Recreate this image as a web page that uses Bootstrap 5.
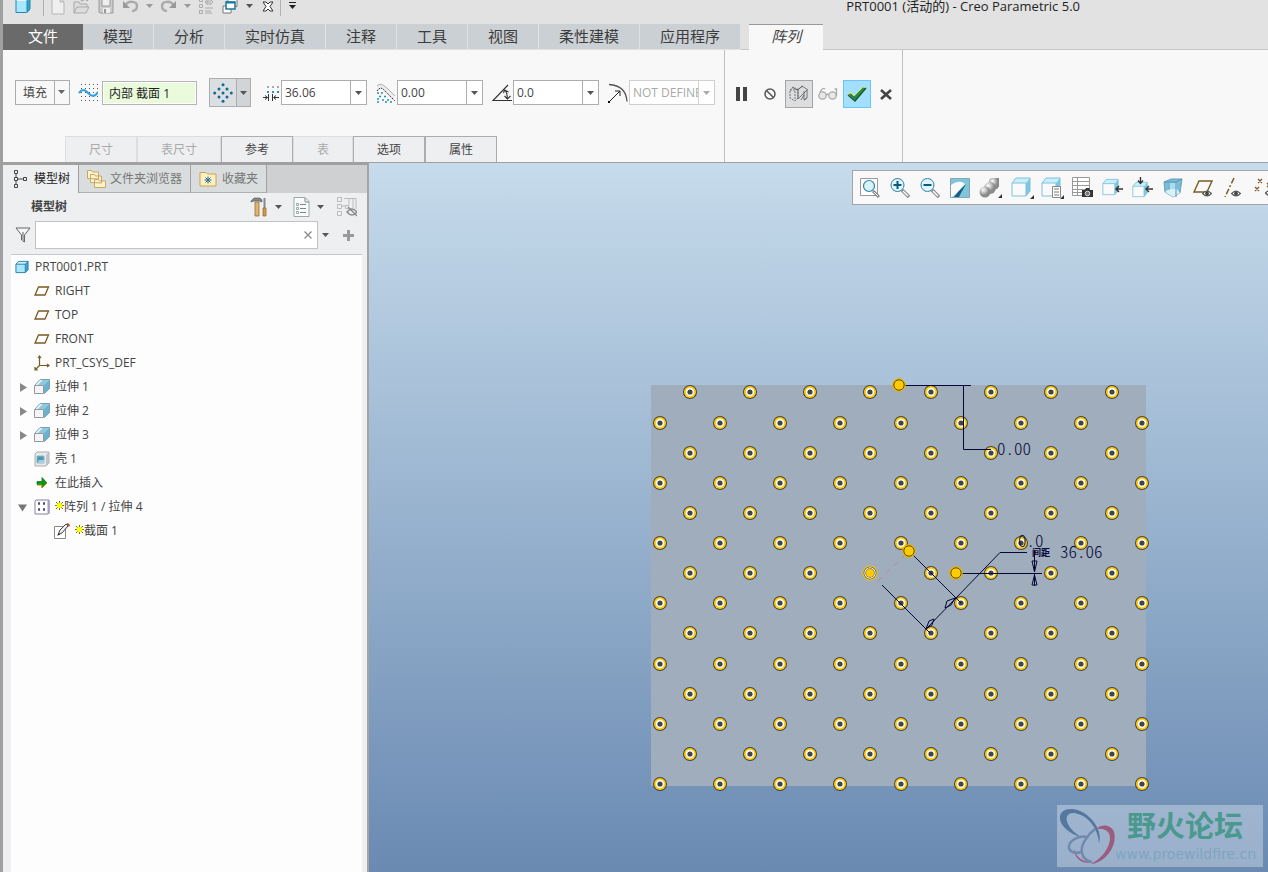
<!DOCTYPE html>
<html lang="zh-CN">
<head>
<meta charset="utf-8">
<meta name="viewport" content="width=device-width, initial-scale=1">
<title>PRT0001 (活动的) - Creo Parametric 5.0</title>
<link href="https://cdn.jsdelivr.net/npm/bootstrap@5.3.0/dist/css/bootstrap.min.css" rel="stylesheet">
<style>
:root{--edge:#a0a0a0;--line:#adadad;--ink:#444}
body{font-family:"Open Sans","Noto Sans CJK SC",sans-serif;font-size:12px;line-height:16px;color:var(--ink);background:#f8f8f8;border-left:3px solid var(--edge)}
button{font:inherit;color:inherit;background:none;border:0;padding:0}
svg{display:block;flex:none}
.titlebar{height:24px;background:#e2e2e2;padding-left:8px}
.quick{height:12px}
.tb{width:24px;height:24px;display:flex;align-items:center;justify-content:center;flex:none}
.tb.slim{width:14px}
.vsep{width:1px;height:20px;background:#b0b0b0}
.apptitle{font-size:13px;line-height:13px;color:#222;padding-right:188px;white-space:nowrap}
.tabs{height:26px;background:#e2e2e2;font-size:15px}
.tabs a{display:flex;align-items:center;justify-content:center;padding:0 20px 2px;height:25px;background:#cbd0d4;color:#3c3c3c;text-decoration:none;margin-right:1px;white-space:nowrap}
.tabs a.filetab{width:80px;padding:0 0 3px;margin:0;background:#6a6a6a;color:#fff;height:26px}
.tabs a.current{background:#f8f8f8;height:26px;padding:0 22px 3px;margin:0;border-top:1px solid #999;font-style:italic;color:#444}
.tabs .filler{border-bottom:1px solid #c6c6c6}
.ribbon{height:113px;border-bottom:1px solid var(--edge)}
.dash{width:722px;border-right:1px solid #bfbfbf}
.acts{width:178px;border-right:1px solid #bfbfbf;padding:30px 0 0 2px;gap:1px}
.params{padding:28px 0 0 12px;height:57px}
.combo{display:flex;height:25px;border:1px solid var(--line);background:#fff;width:86px}
.combo input{border:0;outline:0;min-width:0;flex:1;padding:0 0 0 3px;background:none;color:inherit;font-size:12px}
.combo button{width:16px;border-left:1px solid var(--line);display:flex;align-items:center;justify-content:center}
.combo.off{border-color:#d0d0d0;color:#a8a8a8}
.combo.off button{border-color:#d0d0d0}
.combo.off input::placeholder{color:#a8a8a8}
.kind{appearance:none;width:55px;height:25px;border:1px solid var(--line);border-radius:0;padding:0 0 0 7px;font-size:12px;line-height:20px;color:var(--ink);background:url("data:image/svg+xml,%3Csvg xmlns='http://www.w3.org/2000/svg' width='16' height='25'%3E%3Cpath d='M.5 0V25' stroke='%23adadad'/%3E%3Cpath d='M4 10h7l-3.500 4z' fill='%23666'/%3E%3C/svg%3E") right -1px center no-repeat #f8f8f8}
.section{width:95px;height:24px;border:1px solid #b5b5b5;box-shadow:inset 0 0 0 1px #fff;background:#eafbdc;font-size:12px;color:#222;padding:0 6px;outline:0}
.gridpick{width:42px;height:29px;border:1px solid var(--line);background:#dcdfe1;display:flex;margin:0 8px 0 12px}
.gridpick span{display:flex;align-items:center;justify-content:center}
.gridpick span:first-child{width:27px;border-right:1px solid var(--line)}
.gridpick span:last-child{flex:1;background:#d2d5d7}
.act{width:28px;height:28px;display:flex;align-items:center;justify-content:center;border:1px solid transparent}
.act.on{background:#dcdee0;border-color:#a5a5a5}
.act.ok{background:#a3dfff;border-color:#6bc5f5}
.panels{padding-left:62px}
.panels button{height:26px;border:1px solid #dcdee0;border-bottom:0;background:#eeeff1;padding:0 23px;color:#aaa}
.panels button:enabled{border-color:var(--line);color:var(--ink)}
.side{width:366px;background:#edeff1;border-top:2px solid var(--edge);border-right:2px solid #a4a4a4}
.sidetabs{height:28px;background:#cfd0d1}
.sidetabs button{display:flex;align-items:center;border-right:1px solid var(--edge);border-bottom:1px solid #b0b0b0;background:#d9dddd;color:#777;padding:0 7px;white-space:nowrap}
.sidetabs button.on{background:#edeff1;color:#222;border-bottom:0;width:76px}
.sidetabs .folders{width:112px}
.sidetabs .favs{width:76px}
.sidehead{height:28px;padding-left:28px}
.finder{padding-left:12px}
.search{height:28px;width:283px;border:1px solid #c2c2c2;background:#fff;display:flex}
.search input{border:0;outline:0;flex:1;min-width:0}
.tree{margin:5px 5px 0 8px;border-top:1px solid #c5c8ca;background:#fdfdfd;list-style:none;padding:0;white-space:nowrap}
.tree li{height:24px;display:flex;align-items:center}
.tree .arrow{width:9px;height:9px;margin:0 7px 0 7px}
.tree .glyph{width:16px;height:16px;margin-right:5px}
.tree .root{padding-left:4px}
.tree .root svg{margin-right:6px}
.lv1{padding-left:23px}.lv2{padding-left:43px}
.scene{background:linear-gradient(#c6dbeb,#6a8ab2);min-width:0;overflow:hidden}
.scene>svg{width:100%;height:100%}
.viewbar{position:absolute;right:0;top:7px;width:416px;height:35px;border:1px solid #a5a5a5;border-right:0;background:#f8f8f8;overflow:hidden;padding-left:2px}
.viewbar button{width:30px;height:33px;flex:none;display:flex;align-items:center;justify-content:center}
.viewbar button:nth-child(6){margin-left:2px}
.viewbar button:nth-child(11){margin-left:1px}
.dim{font-family:"Noto Sans CJK SC",sans-serif;font-size:17px;font-weight:300;font-feature-settings:"hwid";fill:#060638}
</style>
</head>
<body class="vh-100 d-flex flex-column overflow-hidden">
<svg width="0" height="0" class="position-absolute" aria-hidden="true">
<defs>
<symbol id="caret" viewBox="0 0 7 4"><path d="M0 0h7L3.500 4z"/></symbol>
<symbol id="cube" viewBox="0 0 16 16"><path d="M2 5l3-3h10l-3 3z" fill="#d6f4ff"/><path d="M12 5l3-3v9l-3 3z" fill="#3fa5cf"/><path d="M2 5h10v9H2z" fill="#a9e7ff"/><path d="M2 5l3-3h10v9l-3 3H2zM2 5h10v9M12 5l3-3" fill="none" stroke="#1f7ea6"/></symbol>
<symbol id="plane" viewBox="0 0 16 16"><path d="M4.500 4h10l-3.500 8h-10z" fill="none" stroke="#7a5b26" stroke-width="1.300"/></symbol>
<symbol id="extrude" viewBox="0 0 16 16"><path d="M.5 6L6 .5h9.500v9L10 15" fill="#e4f4fa"/><path d="M4 6L9 .5h6.500l-5 5.500z" fill="#8ec9e0"/><path d="M10 6l5.500-5.500v9L10 15z" fill="#6cb2d0"/><path d="M1 6L6 .5h9.500v9l-5 5" fill="none" stroke="#7d9fae"/><path d="M.5 6.500h9v8h-9z" fill="#f4f4f6" stroke="#999"/></symbol>
<symbol id="viewcube" viewBox="0 0 20 20"><path d="M1 6l4-5h14l-4 5z" fill="#c9effc"/><path d="M15 6l4-5v13l-4 5z" fill="#7cc8e2"/><path d="M1 6h14v13H1z" fill="#fafafa"/><path d="M1 6l4-5h14v13l-4 5H1zM1 6h14v13" fill="none" stroke="#7fc0da"/></symbol>
<symbol id="eye" viewBox="0 0 11 8"><path d="M.5 4Q5.500-1.500 10.500 4 5.500 9.500.5 4z" fill="#fff" stroke="#555" stroke-width="1.300"/><circle cx="5.500" cy="4" r="2.200" fill="#444"/></symbol>
<symbol id="star" viewBox="0 0 9 9"><path d="M4.500 0v9M0 4.500h9M1 1l7 7M8 1L1 8" stroke="#6b6b00"/><circle cx="4.500" cy="4.500" r="2.800" fill="#ff0"/></symbol>
</defs></svg>

<header class="titlebar d-flex">
 <div class="quick d-flex align-items-center">
  <button class="tb" aria-label="Creo"><svg width="16" height="18" viewBox="0 0 16 18"><path d="M1 4l3-3h11l-3 3z" fill="#dff6ff"/><path d="M12 4l3-3v12l-3 3z" fill="#36a3cd"/><path d="M1 4h11v12H1z" fill="#a8e7ff"/><path d="M1 1v14.500h10.500L15 12V1M12 2v13" fill="none" stroke="#2387ad"/></svg></button>
  <span class="vsep ms-2"></span><span class="pe-1"></span>
  <button class="tb" style="margin-left:-2px" aria-label="新建"><svg width="14" height="18" viewBox="0 0 14 18"><path d="M1 1h8l4 4v12H1zM9 1v4h4" fill="#efefef" stroke="#b5b5b5"/></svg></button>
  <button class="tb" aria-label="打开"><svg width="18" height="16" viewBox="0 0 18 16"><path d="M1 15V4h5l1 2h7v3M1 15l3-6h12l-3 6z" fill="#ddd" stroke="#aaa"/><path d="M8 3l4-2 3 2" fill="none" stroke="#aaa" stroke-width="1.500"/></svg></button>
  <button class="tb" aria-label="保存"><svg width="16" height="16" viewBox="0 0 16 16"><path d="M1 1h14v14H2l-1-1z" fill="#ccc" stroke="#999"/><path d="M4 1h8v7H4z" fill="#eee" stroke="#999"/><path d="M5 10h7v5H5z" fill="#eee"/><path d="M6 11h2v4H6z" fill="#999"/></svg></button>
  <button class="tb" aria-label="撤销"><svg width="17" height="16" viewBox="0 0 17 16"><path d="M3 8c3-6 12-5 12 0 0 3-2 5-5 5" fill="none" stroke="#aaa" stroke-width="2.500"/><path d="M1 3v7h7z" fill="#999"/></svg></button>
  <button class="tb slim" aria-label="撤销列表"><svg width="7" height="4" fill="#999"><use href="#caret"/></svg></button>
  <button class="tb" aria-label="重做"><svg width="17" height="16" viewBox="0 0 17 16"><path d="M14 8C11 2 2 3 2 8c0 3 2 5 5 5" fill="none" stroke="#aaa" stroke-width="2.500"/><path d="M16 3v7H9z" fill="#999"/></svg></button>
  <button class="tb slim" aria-label="重做列表"><svg width="7" height="4" fill="#999"><use href="#caret"/></svg></button>
  <button class="tb" aria-label="重新生成"><svg width="16" height="16" viewBox="0 0 16 16" fill="none" stroke="#aaa"><path d="M1.500.5h3v3h-3zM1.500 6.500h3v3h-3zM1.500 12.500h3v3h-3zM7 10h8M7 13h6M7 15h7M7 4l3-3v6L7 4h3M15 4l-3-3v6z"/></svg></button>
  <button class="tb" aria-label="窗口"><svg width="17" height="16" viewBox="0 0 17 16"><path d="M6 .5h9v8H6zM1 8h8v7H1z" fill="#fff" stroke="#777"/><path d="M4 4h9v7H4z" fill="#fff" stroke="#1c789c" stroke-width="1.500"/><path d="M4 4.500h9" stroke="#1c789c" stroke-width="2"/></svg></button>
  <button class="tb slim" aria-label="窗口列表"><svg width="7" height="4" fill="#555"><use href="#caret"/></svg></button>
  <button class="tb" aria-label="关闭"><svg width="12" height="11" viewBox="0 0 12 11"><path d="M1 1h3l2 2 2-2h3L8 5.500 11 10H8L6 8l-2 2H1l3-4.500z" fill="#fff" stroke="#333"/></svg></button>
  <span class="vsep me-1"></span>
  <button class="tb slim" aria-label="自定义"><svg width="9" height="8" viewBox="0 0 9 8" fill="#222"><path d="M1 0h7v1H1zM1 3h7L4.500 7z"/></svg></button>
 </div>
 <div class="apptitle ms-auto">PRT0001 (活动的) - Creo Parametric 5.0</div>
</header>

<nav class="tabs d-flex align-items-start">
 <a class="filetab" href="#">文件</a><a href="#">模型</a><a href="#">分析</a><a href="#">实时仿真</a><a href="#">注释</a><a href="#">工具</a><a href="#">视图</a><a href="#">柔性建模</a><a href="#">应用程序</a>
 <span class="filler h-100 px-1"></span><a class="current" href="#">阵列</a><span class="filler flex-fill h-100"></span>
</nav>

<section class="ribbon d-flex">
 <div class="dash d-flex flex-column flex-shrink-0">
  <div class="params d-flex align-items-center">
   <select class="kind" aria-label="阵列类型"><option>填充</option></select>
   <svg class="ms-2 me-1" width="20" height="20" viewBox="0 0 20 20"><path d="M3 1.500h17M3 5.500h17M3 9.500h17M3 13.500h17M3 17.500h17" stroke="#555" stroke-dasharray="1 3"/><path d="M1 10c3-4 5-4 9 0s7 4 10-1" fill="none" stroke="#35a4da" stroke-width="2.200"/></svg>
   <input class="section" aria-label="截面" value="内部 截面 1">
   <button class="gridpick" aria-label="菱形阵列"><span><svg width="20" height="20" viewBox="0 0 20 20" fill="#126b92"><circle cx="10" cy="1.700" r="1.500"/><circle cx="6" cy="6" r="1.500"/><circle cx="14" cy="6" r="1.500"/><circle cx="1.700" cy="10" r="1.500"/><circle cx="10" cy="10" r="1.500"/><circle cx="18.300" cy="10" r="1.500"/><circle cx="6" cy="14" r="1.500"/><circle cx="14" cy="14" r="1.500"/><circle cx="10" cy="18.300" r="1.500"/></svg></span><span><svg width="7" height="4" fill="#555"><use href="#caret"/></svg></span></button>
   <svg class="ms-1" width="18" height="18" viewBox="0 0 18 18"><path d="M4 3h2M9 3h2M14 3h2" stroke="#aaa" stroke-width="2"/><path d="M4 8h2M9 8h2M14 8h2" stroke="#2a93bd" stroke-width="2"/><path d="M0 13.500h5M16 13.500h-5M5.500 10v7M9.500 10v7M2 11.500l2.500 2L2 15.500M13 11.500l-2.500 2 2.500 2" fill="none" stroke="#333"/></svg>
   <label class="combo"><input aria-label="间距" value="36.06"><button aria-label="间距列表"><svg width="7" height="4" fill="#555"><use href="#caret"/></svg></button></label>
   <svg class="ms-2" width="22" height="20" viewBox="0 0 22 20"><path d="M2 3c4-4 7-1 17 9v6L9 9 6 6 2 8z" fill="#eee"/><path d="M2 3c4-4 7-1 18 10" fill="none" stroke="#aaa"/><path d="M2 8c3-4 5-4 9 1l9 9" fill="none" stroke="#333" stroke-dasharray="1.500 1"/><path d="M2 10h2M6 10h2M4 13.500h2M9 13.500h2M2 16h2M7 17h2M12 17h2M2 19h2M10 19h2M15 19h2" stroke="#258fb9" stroke-width="1.600"/></svg>
   <label class="combo"><input aria-label="边界距离" value="0.00"><button aria-label="距离列表"><svg width="7" height="4" fill="#555"><use href="#caret"/></svg></button></label>
   <svg class="ms-2" width="22" height="20" viewBox="0 0 22 20"><path d="M17 2L2 17.500h19" fill="none" stroke="#333" stroke-width="1.100"/><path d="M14 7q3 4 2 9M12.500 10l1-3 4 2M13.500 13l3 3 3-3" fill="none" stroke="#333" stroke-width="1.100"/></svg>
   <label class="combo"><input aria-label="旋转" value="0.0"><button aria-label="旋转列表"><svg width="7" height="4" fill="#555"><use href="#caret"/></svg></button></label>
   <svg class="ms-2" width="22" height="20" viewBox="0 0 22 20"><path d="M2 1.500q17 1 18 17" fill="none" stroke="#555" stroke-width="1.300"/><path d="M2 19L13 8M8 8h5v5" fill="none" stroke="#222"/><path d="M1 18h2v2H1z"/></svg>
   <label class="combo off"><input aria-label="半径" placeholder="NOT DEFINED" disabled><button aria-label="半径列表" disabled><svg width="7" height="4" fill="#aaa"><use href="#caret"/></svg></button></label>
  </div>
  <div class="panels d-flex mt-auto">
   <button disabled>尺寸</button><button disabled>表尺寸</button><button>参考</button><button disabled>表</button><button>选项</button><button>属性</button>
  </div>
 </div>
 <div class="acts d-flex flex-shrink-0">
  <button class="act" aria-label="暂停"><svg width="11" height="14" fill="#444"><path d="M0 0h4v14H0zM7 0h4v14H7z"/></svg></button>
  <button class="act" aria-label="无预览"><svg width="12" height="12" viewBox="0 0 12 12" fill="none" stroke="#555" stroke-width="1.500"><circle cx="6" cy="6" r="5"/><path d="M2.500 2.500l7 7"/></svg></button>
  <button class="act on" aria-label="分离"><svg width="20" height="18" viewBox="0 0 20 18" fill="none" stroke="#666" stroke-width=".9"><path d="M1 5l4-3 4 3v8l-3 3-5-3zM1 5h5l3-1M6 6v9" stroke-dasharray="2 1"/><path d="M9 14V5l4-4 6 4M18 5v8l-3 2V6M9 14l9-9M12 15l3-5M3 2l5 3 6-4M15 15l3-2"/></svg></button>
  <button class="act" aria-label="特征预览"><svg width="20" height="14" viewBox="0 0 20 14" fill="#e8e8e8" stroke="#aaa" stroke-width="1.300"><circle cx="4.500" cy="8.500" r="3.700"/><circle cx="14.500" cy="8.500" r="3.700"/><path d="M2 5q3-5 5-3M8.500 8q1-2 2 0M18.500 9V2h-2" fill="none"/></svg></button>
  <button class="act ok" aria-label="确定"><svg width="20" height="16" viewBox="0 0 20 16"><path d="M1 8l3-1 3 3L16 1l3 1L8 15z" fill="#2b8b4d" stroke="#e8ef3c" stroke-width=".8"/><path d="M1 9l7 6L19 2" fill="none" stroke="#17552e" stroke-width="1.300"/></svg></button>
  <button class="act" aria-label="取消"><svg width="12" height="12" viewBox="0 0 12 12"><path d="M1 2l10 9M11 2L1 11" stroke="#444" stroke-width="2.600"/></svg></button>
 </div>
</section>

<main class="d-flex flex-fill overflow-hidden">
 <aside class="side flex-shrink-0 d-flex flex-column">
  <div class="sidetabs d-flex">
   <button class="on"><svg class="ms-1 me-1" width="16" height="18" viewBox="0 0 16 18" fill="none" stroke="#444"><path d="M.5.5h3v3h-3zM.5 7.500h3v3h-3zM.5 14.500h3v3h-3zM9.500 7.500h3v3h-3zM2 4v3M2 11v3M4 9h5"/></svg><span>模型树</span></button>
   <button class="folders"><svg class="me-1" width="20" height="20" viewBox="0 0 20 20" fill="#fff3cc" stroke="#c8a766"><path d="M1.500 9.500v-8h4l1 1.500h6v7zM4.500 13.500v-8h4l1 1.500h6v7zM8.500 18.500v-8h4l1 1.500h6v6.500z"/></svg><span>文件夹浏览器</span></button>
   <button class="favs"><svg class="me-1" width="20" height="16" viewBox="0 0 20 16"><path d="M2 15V1.500h6L9.500 3H18v12z" fill="#fff0c4" stroke="#caa254"/><path d="M10 5.500v7M6.500 9h7M7.500 6.500l5 5M12.500 6.500l-5 5" stroke="#1b6c91"/></svg><span>收藏夹</span></button>
  </div>
  <div class="sidehead d-flex align-items-center"><strong class="fw-semibold me-auto">模型树</strong>
   <button class="tb" aria-label="设置"><svg width="18" height="20" viewBox="0 0 18 20"><path d="M1 4l3-3h6l2 2v2l-3-1H4L1 5z" fill="#81858f" stroke="#555" stroke-width=".6"/><path d="M5 5h4v14H5z" fill="#dfb56f" stroke="#8a632a" stroke-width=".7"/><path d="M14.500 1v10" stroke="#888" stroke-width="2"/><path d="M13 11h3v8h-3z" fill="#d39b46" stroke="#8a632a" stroke-width=".7"/></svg></button>
   <button class="tb slim me-1" aria-label="设置列表"><svg width="7" height="4" fill="#555"><use href="#caret"/></svg></button>
   <button class="tb" aria-label="显示"><svg width="17" height="20" viewBox="0 0 17 20"><path d="M1 .5h11l4 4v15H1z" fill="#fbfbfb" stroke="#9aa8a8"/><path d="M12 1v4h4M7 7.500h6M7 11.500h6M7 15.500h6" fill="none" stroke="#788"/><path d="M3.500 6.500h2v2h-2zM3.500 10.500h2v2h-2zM3.500 14.500h2v2h-2z" fill="none" stroke="#9aa"/></svg></button>
   <button class="tb slim me-1" aria-label="显示列表"><svg width="7" height="4" fill="#555"><use href="#caret"/></svg></button>
   <button class="tb ms-1 me-2" aria-label="隐藏"><svg width="20" height="20" viewBox="0 0 20 20" fill="none" stroke="#bbb"><path d="M.5.500h4v4h-4zM.5 7.500h4v4h-4zM.5 14.500h4v4h-4zM8.500 8.500h3v3h-3zM5 9h3M7 1.500h12V12M12 2v6M16 2v9"/><path d="M10 15q5-6 10 0-5 6-10 0zM11 10l9 9" stroke="#888" stroke-width="1.300"/></svg></button>
  </div>
  <div class="finder d-flex align-items-center">
   <svg class="me-1" width="16" height="16" viewBox="0 0 16 16"><path d="M1 1h14L9.500 8v7l-3-2V8z" fill="#f6f6f6" stroke="#666"/><path d="M8 5v9" stroke="#aaa" stroke-width="2"/></svg>
   <div class="search"><input type="text" aria-label="搜索"><button class="px-1" aria-label="清除"><svg width="10" height="10" viewBox="0 0 10 10" stroke="#888" stroke-width="1.200"><path d="M1.500 1.500l7 7M8.500 1.500l-7 7"/></svg></button></div>
   <button class="tb slim" aria-label="搜索选项"><svg width="7" height="4" fill="#555"><use href="#caret"/></svg></button>
   <button class="tb ms-1" aria-label="添加"><svg width="11" height="11"><path d="M0 5.500h11M5.500 0v11" stroke="#999" stroke-width="3"/></svg></button>
  </div>
  <ul class="tree flex-fill">
   <li class="root"><svg width="14" height="14" viewBox="1 1 15 14"><use href="#cube" width="16" height="16"/></svg>PRT0001.PRT</li>
   <li class="lv1"><svg class="glyph"><use href="#plane"/></svg>RIGHT</li>
   <li class="lv1"><svg class="glyph"><use href="#plane"/></svg>TOP</li>
   <li class="lv1"><svg class="glyph"><use href="#plane"/></svg>FRONT</li>
   <li class="lv1"><svg class="glyph" viewBox="0 0 16 16" fill="none" stroke="#7a5b26" stroke-width="1.200"><path d="M5.500 1v9.500H15M5.500 10.500L1 15M4 3l1.500-2L7 3M13 9l2 1.500-2 1.500M1 12v3h3"/></svg>PRT_CSYS_DEF</li>
   <li><svg class="arrow" viewBox="0 0 9 9"><path d="M2 0l7 4.500L2 9z" fill="#888"/></svg><svg class="glyph"><use href="#extrude"/></svg>拉伸 1</li>
   <li><svg class="arrow" viewBox="0 0 9 9"><path d="M2 0l7 4.500L2 9z" fill="#888"/></svg><svg class="glyph"><use href="#extrude"/></svg>拉伸 2</li>
   <li><svg class="arrow" viewBox="0 0 9 9"><path d="M2 0l7 4.500L2 9z" fill="#888"/></svg><svg class="glyph"><use href="#extrude"/></svg>拉伸 3</li>
   <li class="lv1"><svg class="glyph" viewBox="0 0 16 16"><path d="M1 3l2-2h12v11l-3 3H1z" fill="#e8ebee" stroke="#aaa"/><path d="M12 4l3-3v11l-3 3z" fill="#bcc3c9"/><path d="M3 5h7v7H3z" fill="#4f94b5" stroke="#8bb"/><path d="M4 11l1-2h5v3H4z" fill="#9dd0e5"/></svg>壳 1</li>
   <li class="lv1"><svg class="glyph" viewBox="0 0 16 16"><path d="M3 6.500h5v-4l5 5.500-5 5v-3.500H3z" fill="#0b9a0b" stroke="#063" stroke-width=".7"/><path d="M3 10h5v3l5-5" fill="none" stroke="#990"/></svg>在此插入</li>
   <li><svg class="arrow" viewBox="0 0 9 9"><path d="M0 1.500h9L4.500 8.500z" fill="#777"/></svg><svg class="glyph" viewBox="0 0 16 16"><path d="M1 2l1-1h13v13l-1 1H1z" fill="#fff" stroke="#8a809f"/><path d="M14.500 2v13" stroke="#a79cc6" stroke-width="2"/><path d="M4 4.500h2M9 4.500h2M4 10.500h2M9 10.500h2" stroke="#514b75" stroke-width="2.500"/></svg><svg class="mb-1" width="9" height="9"><use href="#star"/></svg><span>阵列 1 / 拉伸 4</span></li>
   <li class="lv2"><svg class="glyph" viewBox="0 0 16 16"><path d="M.5 3.500h11v12H.5z" fill="#fff" stroke="#888"/><path d="M4 12l2-5 6-6 2 2-6 7z" fill="#eee" stroke="#444"/><path d="M12 1l2-1 2 2-1 2z" fill="#b34b43"/><path d="M3 13l3-2-1-1z" fill="#222"/></svg><svg class="mb-1" width="9" height="9"><use href="#star"/></svg><span>截面 1</span></li>
  </ul>
 </aside>

 <section class="scene position-relative flex-fill">
  <svg viewBox="369 163 899 709" role="img" aria-label="填充阵列预览">
   <defs>
    <g id="pt"><circle r="7" fill="#444"/><circle r="6" fill="#ffcb05"/><circle r="4.200" fill="#fff"/><circle r="2.600" fill="#444"/></g>
    <g id="grip"><circle r="6.300" fill="#ffcb05" stroke="#e3b100"/><circle r="5.200" fill="#ffcb05" stroke="#5c4a00"/></g>
    <g id="rowa"><use href="#pt" x="690"/><use href="#pt" x="750"/><use href="#pt" x="810"/><use href="#pt" x="870"/><use href="#pt" x="931"/><use href="#pt" x="991"/><use href="#pt" x="1051"/><use href="#pt" x="1112"/></g>
    <g id="rowb"><use href="#pt" x="660"/><use href="#pt" x="720"/><use href="#pt" x="780"/><use href="#pt" x="840"/><use href="#pt" x="901"/><use href="#pt" x="961"/><use href="#pt" x="1021"/><use href="#pt" x="1081"/><use href="#pt" x="1142"/></g>
   </defs>
   <path d="M651 385h495v401H651z" fill="#a0adbc"/>
   <use href="#rowa" y="392"/><use href="#rowb" y="423"/><use href="#rowa" y="453"/><use href="#rowb" y="483"/><use href="#rowa" y="513"/><use href="#rowb" y="543"/><use href="#rowa" y="573"/><use href="#rowb" y="603"/><use href="#rowa" y="633"/><use href="#rowb" y="664"/><use href="#rowa" y="694"/><use href="#rowb" y="724"/><use href="#rowa" y="754"/><use href="#rowb" y="784"/>
   <g transform="translate(870 573)"><circle r="7.500" fill="#ffcb05"/><circle r="6.500" fill="#555"/><circle r="5.700" fill="#fff"/><circle r="4.700" fill="#6b5a20"/><circle r="4" fill="#ffcb05"/></g>
   <g fill="none" stroke="#060638" stroke-width="1">
    <path d="M904 385.500h67M963.500 385v64.500H991M912 554l49 49M882 585l48 48M926 629l74-76.500h27M961 573.500h81"/>
    <path d="M926 629l3-8 5-2-2 6zM955 598l-4 7-6 3 2-7zM1034.500 550v22M1034.500 574v12M1032 561h5l-2.500 11zM1032 585h5l-2.500-10z"/>
   </g>
   <path d="M878 581l27-26" stroke="#b98087" stroke-width=".8" stroke-dasharray="6 5"/>
   <use href="#grip" x="899" y="385"/><use href="#grip" x="909" y="551"/><use href="#grip" x="956" y="573"/>
   <text class="dim" x="997" y="455">0.00</text><text class="dim" x="1018" y="547">0.0</text><text class="dim" x="1060" y="558">36.06</text>
   <text x="1032" y="556" font-size="9" font-weight="700" font-family="Noto Sans CJK SC, sans-serif" fill="#060638">间距</text>
   <path d="M1057 805h206v62h-206z" fill="#fff" opacity=".32"/>
   <path fill-rule="evenodd" fill="#53779f" d="M1060 818c0-9 10-11 20-7 12 5 23 20 19 32-1-14-10-26-21-29-9-3-14 2-10 10 3 6 8 10 13 13-11-3-21-11-21-19z"/>
   <path fill="#9c5c7d" d="M1096 829c6-6 16-4 18 3 4 15-10 31-23 32 10-5 19-16 19-26 0-7-6-10-14-9zM1074 848c2 10 9 14 18 14-9 3-18-3-18-14z"/>
   <g fill="none" stroke="#7189ae" stroke-width="2.500"><path d="M1095 829c-8 6-15 17-13 24 1 5 5 8 10 9"/><path d="M1087 837c-10-2-19 5-18 11 1 4 6 6 12 4"/></g>
   <text x="1127" y="837" font-size="29" font-weight="700" font-family="Noto Sans CJK SC, sans-serif" fill="#4a998f">野火论坛</text>
   <text x="1115" y="859" font-size="14" font-family="DejaVu Sans, sans-serif" fill="#7da5c2">www.proewildfire.cn</text>
  </svg>
  <div class="viewbar d-flex" role="toolbar">
   <button aria-label="重新调整"><svg width="20" height="20" viewBox="0 0 20 20"><path d="M.5.5h17v17H.5z" fill="#fff" stroke="#999"/><circle cx="9" cy="8" r="5.500" fill="#d9f2fc" stroke="#2a83a8" stroke-width="1.200"/><path d="M13 13l6 6" stroke="#888" stroke-width="3"/><path d="M14 14l4 4" stroke="#eee"/></svg></button>
   <button aria-label="放大"><svg width="20" height="20" viewBox="0 0 20 20"><circle cx="7.500" cy="7" r="6.500" fill="#dff4fc" stroke="#2a83a8"/><path d="M3.500 7h8M7.500 3v8" stroke="#0d5a80" stroke-width="2"/><path d="M12 12l7 7" stroke="#888" stroke-width="3.500"/><path d="M13 13l5 5" stroke="#fff" stroke-width="1.500"/></svg></button>
   <button aria-label="缩小"><svg width="20" height="20" viewBox="0 0 20 20"><circle cx="7.500" cy="7" r="6.500" fill="#dff4fc" stroke="#2a83a8"/><path d="M3.500 7h8" stroke="#0d5a80" stroke-width="2"/><path d="M12 12l7 7" stroke="#888" stroke-width="3.500"/><path d="M13 13l5 5" stroke="#fff" stroke-width="1.500"/></svg></button>
   <button aria-label="重画"><svg width="20" height="20" viewBox="0 0 20 20"><path d="M.5.500h19v19H.5z" fill="#7fc6dd" stroke="#86a5b3"/><path d="M1 7q9-6 14-1l-8 9-5 4H1z" fill="#fafafa"/><path d="M16 6l-8 8-4 5h5l2-4z" fill="#155e80"/></svg></button>
   <button aria-label="显示样式"><svg width="23" height="20" viewBox="0 0 23 20"><defs><radialGradient id="ball" cx=".35" cy=".3"><stop stop-color="#fff"/><stop offset="1" stop-color="#8a8a8a"/></radialGradient></defs><path d="M10 2l2-2h8v8l-2 3h-8z" fill="url(#ball)"/><path d="M18 2l2-2v8l-2 3z" fill="#888"/><circle cx="11" cy="10" r="6" fill="url(#ball)"/><circle cx="6" cy="14" r="5.500" fill="url(#ball)"/><path d="M23 16v4h-4z" fill="#333"/></svg></button>
   <button aria-label="已保存方向"><svg width="23" height="22" viewBox="0 0 23 22"><svg width="20" height="20"><use href="#viewcube"/></svg><path d="M23 18v4h-4z" fill="#333"/></svg></button>
   <button aria-label="视图管理器"><svg width="23" height="22" viewBox="0 0 23 22"><svg width="20" height="20"><use href="#viewcube"/></svg><path d="M11.500 9.500h8v11h-8z" fill="#fff" stroke="#888"/><path d="M13 12h5M13 15h5M13 18h5" stroke="#777"/><path d="M23 18v4h-4z" fill="#333"/></svg></button>
   <button aria-label="截图"><svg width="21" height="21" viewBox="0 0 21 21"><path d="M.5.5h17v18H.5z" fill="#fff" stroke="#999"/><path d="M.5 4.500h17M.5 8.500h17M.5 12.500h17M.5 15.500h17M5.500 1v17" stroke="#999"/><path d="M10 13h3l1-2h3l1 2h3v7H10z" fill="#333"/><circle cx="15.500" cy="16.500" r="2.300" fill="#777" stroke="#ddd"/></svg></button>
   <button aria-label="前视图"><svg width="21" height="19" viewBox="0 0 21 19"><svg width="17" height="18"><use href="#viewcube"/></svg><path d="M21 11h-7M17 8l-3 3 3 3" fill="none" stroke="#333" stroke-width="1.500"/></svg></button>
   <button aria-label="顶视图"><svg width="21" height="21" viewBox="0 0 21 21"><svg y="4" width="16" height="17"><use href="#viewcube"/></svg><path d="M21 12h-7M17 9l-3 3 3 3M8.500 0v6M6 3.500l2.500 3 2.500-3" fill="none" stroke="#333" stroke-width="1.400"/></svg></button>
   <button aria-label="透视图"><svg width="20" height="20" viewBox="0 0 20 20"><path d="M1 4l7-3h11l-2 14-7 4-8-5z" fill="#7bbdd8" stroke="#6a9fb8"/><path d="M5 5h9v8l-8 2z" fill="#a9dcee"/><path d="M2 14l4-3h8l3 4-7 4z" fill="#d8f0f8"/><path d="M1 4h12l6-3M13 4v15M6 5v7" stroke="#5599b8" fill="none"/></svg></button>
   <button aria-label="平面显示"><svg width="20" height="20" viewBox="0 0 20 20"><path d="M6 3h13l-5 11H1z" fill="none" stroke="#7a5b26" stroke-width="1.400"/><svg x="9" y="12" width="10" height="7"><use href="#eye"/></svg></svg></button>
   <button aria-label="轴显示"><svg width="20" height="20" viewBox="0 0 20 20"><path d="M11 0L2 19" stroke="#7a5b26" stroke-width="1.500" stroke-dasharray="6 2 2 2"/><svg x="8" y="12" width="10" height="7"><use href="#eye"/></svg></svg></button>
   <button aria-label="点显示"><svg width="20" height="20" viewBox="0 0 20 20"><path d="M5 1l4 4M9 1L5 5M2 9l4 4M6 9l-4 4M14 5l4 4M18 5l-4 4" stroke="#7a5b26" stroke-width="1.300"/><svg x="12" y="11" width="11" height="8"><use href="#eye"/></svg></svg></button>
  </div>
 </section>
</main>
<script src="https://cdn.jsdelivr.net/npm/bootstrap@5.3.0/dist/js/bootstrap.bundle.min.js"></script>
</body>
</html>
